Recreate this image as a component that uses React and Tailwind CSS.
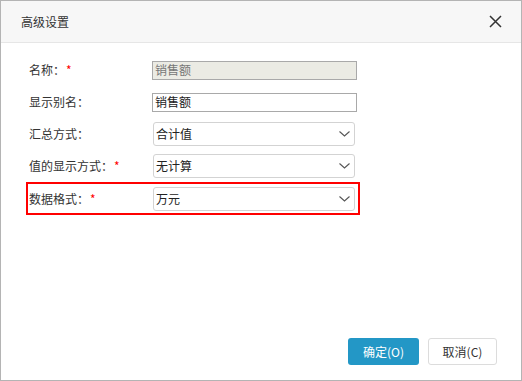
import React from 'react';

const font = { fontFamily: '"Noto Sans CJK SC", "Microsoft YaHei", sans-serif' };

const Chevron = () => (
  <svg width="11" height="6" viewBox="0 0 11 6" className="shrink-0">
    <path d="M0.5 0.5 L5.5 5 L10.5 0.5" fill="none" stroke="#555" strokeWidth="1.1" />
  </svg>
);

const Label = ({ text, required }) => (
  <div className="w-[124px] pl-px text-[12px] text-[#333] flex items-center">
    <span>{text}</span>
    {required && <span className="text-[#f00] ml-px">*</span>}
  </div>
);

const Select = ({ value }) => (
  <div className="ml-px w-[202px] h-[24px] border border-[#d3d3d3] rounded-[3px] bg-white flex items-center justify-between pl-[2px] pr-[4px] text-[12px] text-[#222]">
    <span>{value}</span>
    <Chevron />
  </div>
);

const Row = ({ children, highlight }) => (
  <div
    className={`ml-[25px] w-[334px] flex items-center border-2 ${
      highlight ? 'h-[33px] border-[#f00]' : 'h-[32px] border-transparent'
    }`}
  >
    {children}
  </div>
);

export default function App() {
  return (
    <div className="w-[522px] h-[381px] bg-white border border-[#b4b4b4] flex flex-col" style={font}>
      {/* header */}
      <div className="h-[42px] shrink-0 bg-[#f7f7f7] border-b border-[#e6e6e6] pl-5 pr-[19px] flex items-center justify-between">
        <span className="text-[12px] text-[#333]">高级设置</span>
        <svg width="13" height="13" viewBox="0 0 13 13">
          <path d="M1 1 L12 12 M12 1 L1 12" stroke="#333" strokeWidth="1.5" />
        </svg>
      </div>

      {/* form */}
      <div className="flex-1 pt-[11px] flex flex-col">
        <Row>
          <Label text="名称：" required />
          <div className="w-[205px] h-[19px] border border-[#a9a9a9] bg-[#ebebe4] flex items-center pl-[2px] text-[12px] text-[#777]">
            销售额
          </div>
        </Row>
        <Row>
          <Label text="显示别名：" />
          <div className="w-[205px] h-[19px] border border-[#a9a9a9] bg-white flex items-center pl-[2px] text-[12px] text-[#222]">
            销售额
          </div>
        </Row>
        <Row>
          <Label text="汇总方式：" />
          <Select value="合计值" />
        </Row>
        <Row>
          <Label text="值的显示方式：" required />
          <Select value="无计算" />
        </Row>
        <Row highlight>
          <Label text="数据格式：" required />
          <Select value="万元" />
        </Row>
      </div>

      {/* footer */}
      <div className="flex justify-end gap-[9px] pr-[24px] pb-[15px]">
        <button className="w-[71px] h-[27px] rounded-[3px] bg-[#2397c6] text-white text-[12px]">确定(O)</button>
        <button className="w-[69px] h-[27px] rounded-[3px] bg-white border border-[#dcdcdc] text-[#333] text-[12px]">取消(C)</button>
      </div>
    </div>
  );
}
